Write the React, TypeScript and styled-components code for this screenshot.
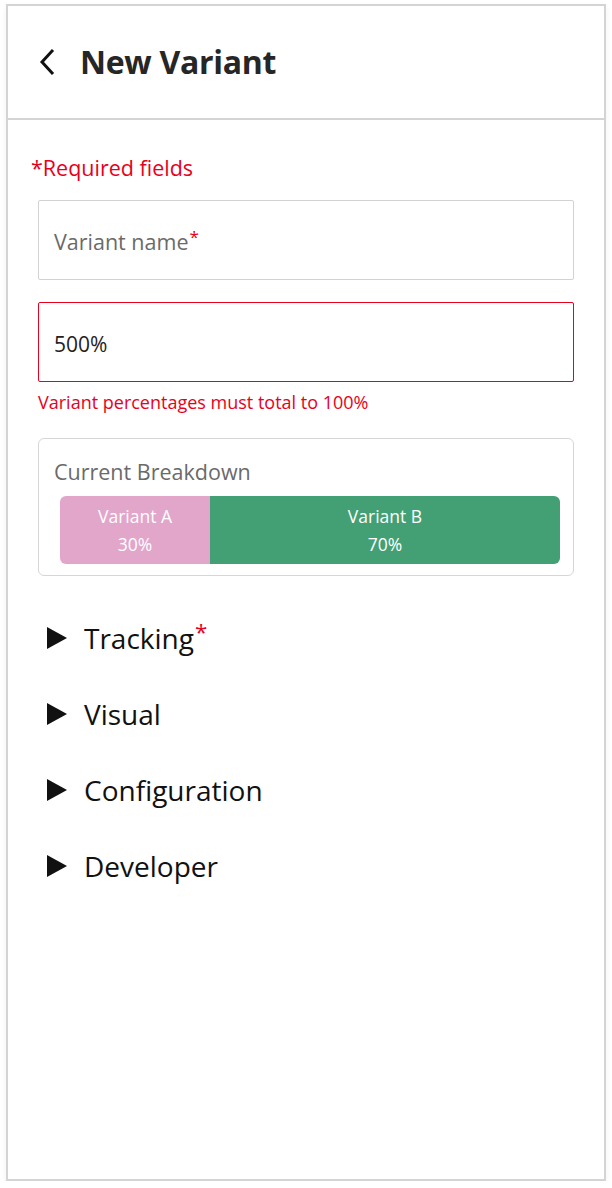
import * as React from 'react';
import styled, { createGlobalStyle } from 'styled-components';

const GlobalStyle = createGlobalStyle`
html, body {
    margin: 0;
    padding: 0;
    background: #fff;
}
body {
    font-family: "Open Sans", "Liberation Sans", Arial, sans-serif;
}
`

interface Variant {
    name: string;
    percent: number;
    color: string;
}

const variants: Variant[] = [
    { name: 'Variant A', percent: 30, color: '#e2a6cb' },
    { name: 'Variant B', percent: 70, color: '#43a074' },
];

const sections = [
    { title: 'Tracking', required: true },
    { title: 'Visual', required: false },
    { title: 'Configuration', required: false },
    { title: 'Developer', required: false },
];

const BackIcon = () => <svg width="20" height="28" viewBox="0 0 20 28" fill="none">
    <path d="M14 3 L4 14 L14 25" stroke="#111" strokeWidth="3" strokeLinecap="square" />
</svg>;

const Caret = () => <svg width="20" height="22" viewBox="0 0 20 22">
    <path d="M0 0 L20 11 L0 22 Z" fill="#111" />
</svg>;

const App = () => {
    const [name, setName] = React.useState('');
    const [percent, setPercent] = React.useState('500%');

    return <>
        <GlobalStyle />
        <StyledFrame>
            <StyledHeader>
                <StyledBack aria-label="Back"><BackIcon /></StyledBack>
                <StyledHeading>New Variant</StyledHeading>
            </StyledHeader>

            <StyledBody>
                <StyledRequired>*Required fields</StyledRequired>

                <StyledFieldset>
                    <StyledField>
                        <StyledInput value={name} onChange={e => setName(e.target.value)} aria-label="Variant name" />
                        {!name && <StyledPlaceholder>Variant name<StyledStar>*</StyledStar></StyledPlaceholder>}
                    </StyledField>

                    <div>
                        <StyledField>
                            <StyledInput $error value={percent} onChange={e => setPercent(e.target.value)} aria-label="Percentage" />
                        </StyledField>
                        <StyledError>Variant percentages must total to 100%</StyledError>
                    </div>

                    <StyledCard>
                        <StyledCardTitle>Current Breakdown</StyledCardTitle>
                        <StyledBar>
                            {variants.map(v => <StyledSegment key={v.name} $color={v.color} style={{ flexGrow: v.percent }}>
                                <span>{v.name}</span>
                                <span>{v.percent}%</span>
                            </StyledSegment>)}
                        </StyledBar>
                    </StyledCard>
                </StyledFieldset>

                <StyledSections>
                    {sections.map(s => <StyledSection key={s.title}>
                        <Caret />
                        <span>{s.title}{s.required && <StyledStar>*</StyledStar>}</span>
                    </StyledSection>)}
                </StyledSections>
            </StyledBody>
        </StyledFrame>
    </>;
}

const StyledFrame = styled.div`
box-sizing: border-box;
margin: 4px 6px 0 6px;
width: 600px;
height: 1177px;
border: 2px solid #d4d4d4;
box-shadow: 0 3px 6px rgba(0,0,0,0.06);
background: #fff;
`

const StyledHeader = styled.header`
display: flex;
align-items: center;
gap: 22px;
height: 112px;
padding: 0 0 0 30px;
border-bottom: 2px solid #d4d4d4;
box-sizing: content-box;
`

const StyledBack = styled.button`
display: flex;
padding: 0;
border: none;
background: none;
cursor: pointer;
`

const StyledHeading = styled.h1`
margin: 0;
font-size: 32px;
line-height: 40px;
font-weight: bold;
color: #262626;
letter-spacing: -0.3px;
`

const StyledBody = styled.div`
padding: 36px 30px 0 23px;
`

const StyledRequired = styled.div`
font-size: 21.5px;
line-height: 24px;
color: #e8001c;
`

const StyledFieldset = styled.div`
display: flex;
flex-direction: column;
gap: 22px;
margin: 20px 0 0 7px;
`

const StyledField = styled.div`
position: relative;
`

const StyledInput = styled.input<{ $error?: boolean }>`
box-sizing: border-box;
display: block;
width: 536px;
height: 80px;
padding: 4px 15px 0 15px;
border: 1px solid ${p => p.$error ? '#e8001c' : '#d2d2d2'};
border-radius: 2px;
font-family: inherit;
font-size: 21px;
color: #222;
outline: none;
`

const StyledPlaceholder = styled.span`
position: absolute;
left: 16px;
top: 28px;
font-size: 21.5px;
line-height: 28px;
color: #6a6a6a;
pointer-events: none;
`

const StyledStar = styled.sup`
color: #e8001c;
font-size: 0.8em;
line-height: 1;
vertical-align: top;
position: relative;
top: 0;
margin-left: 1px;
`

const StyledError = styled.div`
margin-top: 9px;
font-size: 18px;
line-height: 22px;
color: #e8001c;
`

const StyledCard = styled.div`
box-sizing: border-box;
width: 536px;
padding: 20px 13px 11px 15px;
border: 1px solid #d6d6d6;
border-radius: 6px;
margin-top: 3px;
`

const StyledCardTitle = styled.div`
font-size: 21.5px;
color: #6a6a6a;
line-height: 26px;
`

const StyledBar = styled.div`
display: flex;
height: 68px;
margin: 11px 0 0 6px;
border-radius: 6px;
overflow: hidden;
`

const StyledSegment = styled.div<{ $color: string }>`
flex-basis: 0;
display: flex;
flex-direction: column;
align-items: center;
justify-content: center;
gap: 6px;
background: ${p => p.$color};
color: #fff;
font-size: 17.5px;
line-height: 22px;
`

const StyledSections = styled.div`
display: flex;
flex-direction: column;
gap: 42px;
margin: 45px 0 0 16px;
`

const StyledSection = styled.div`
display: flex;
align-items: center;
gap: 17px;
height: 34px;
font-size: 28px;
line-height: 34px;
color: #111;
`

export default App;
